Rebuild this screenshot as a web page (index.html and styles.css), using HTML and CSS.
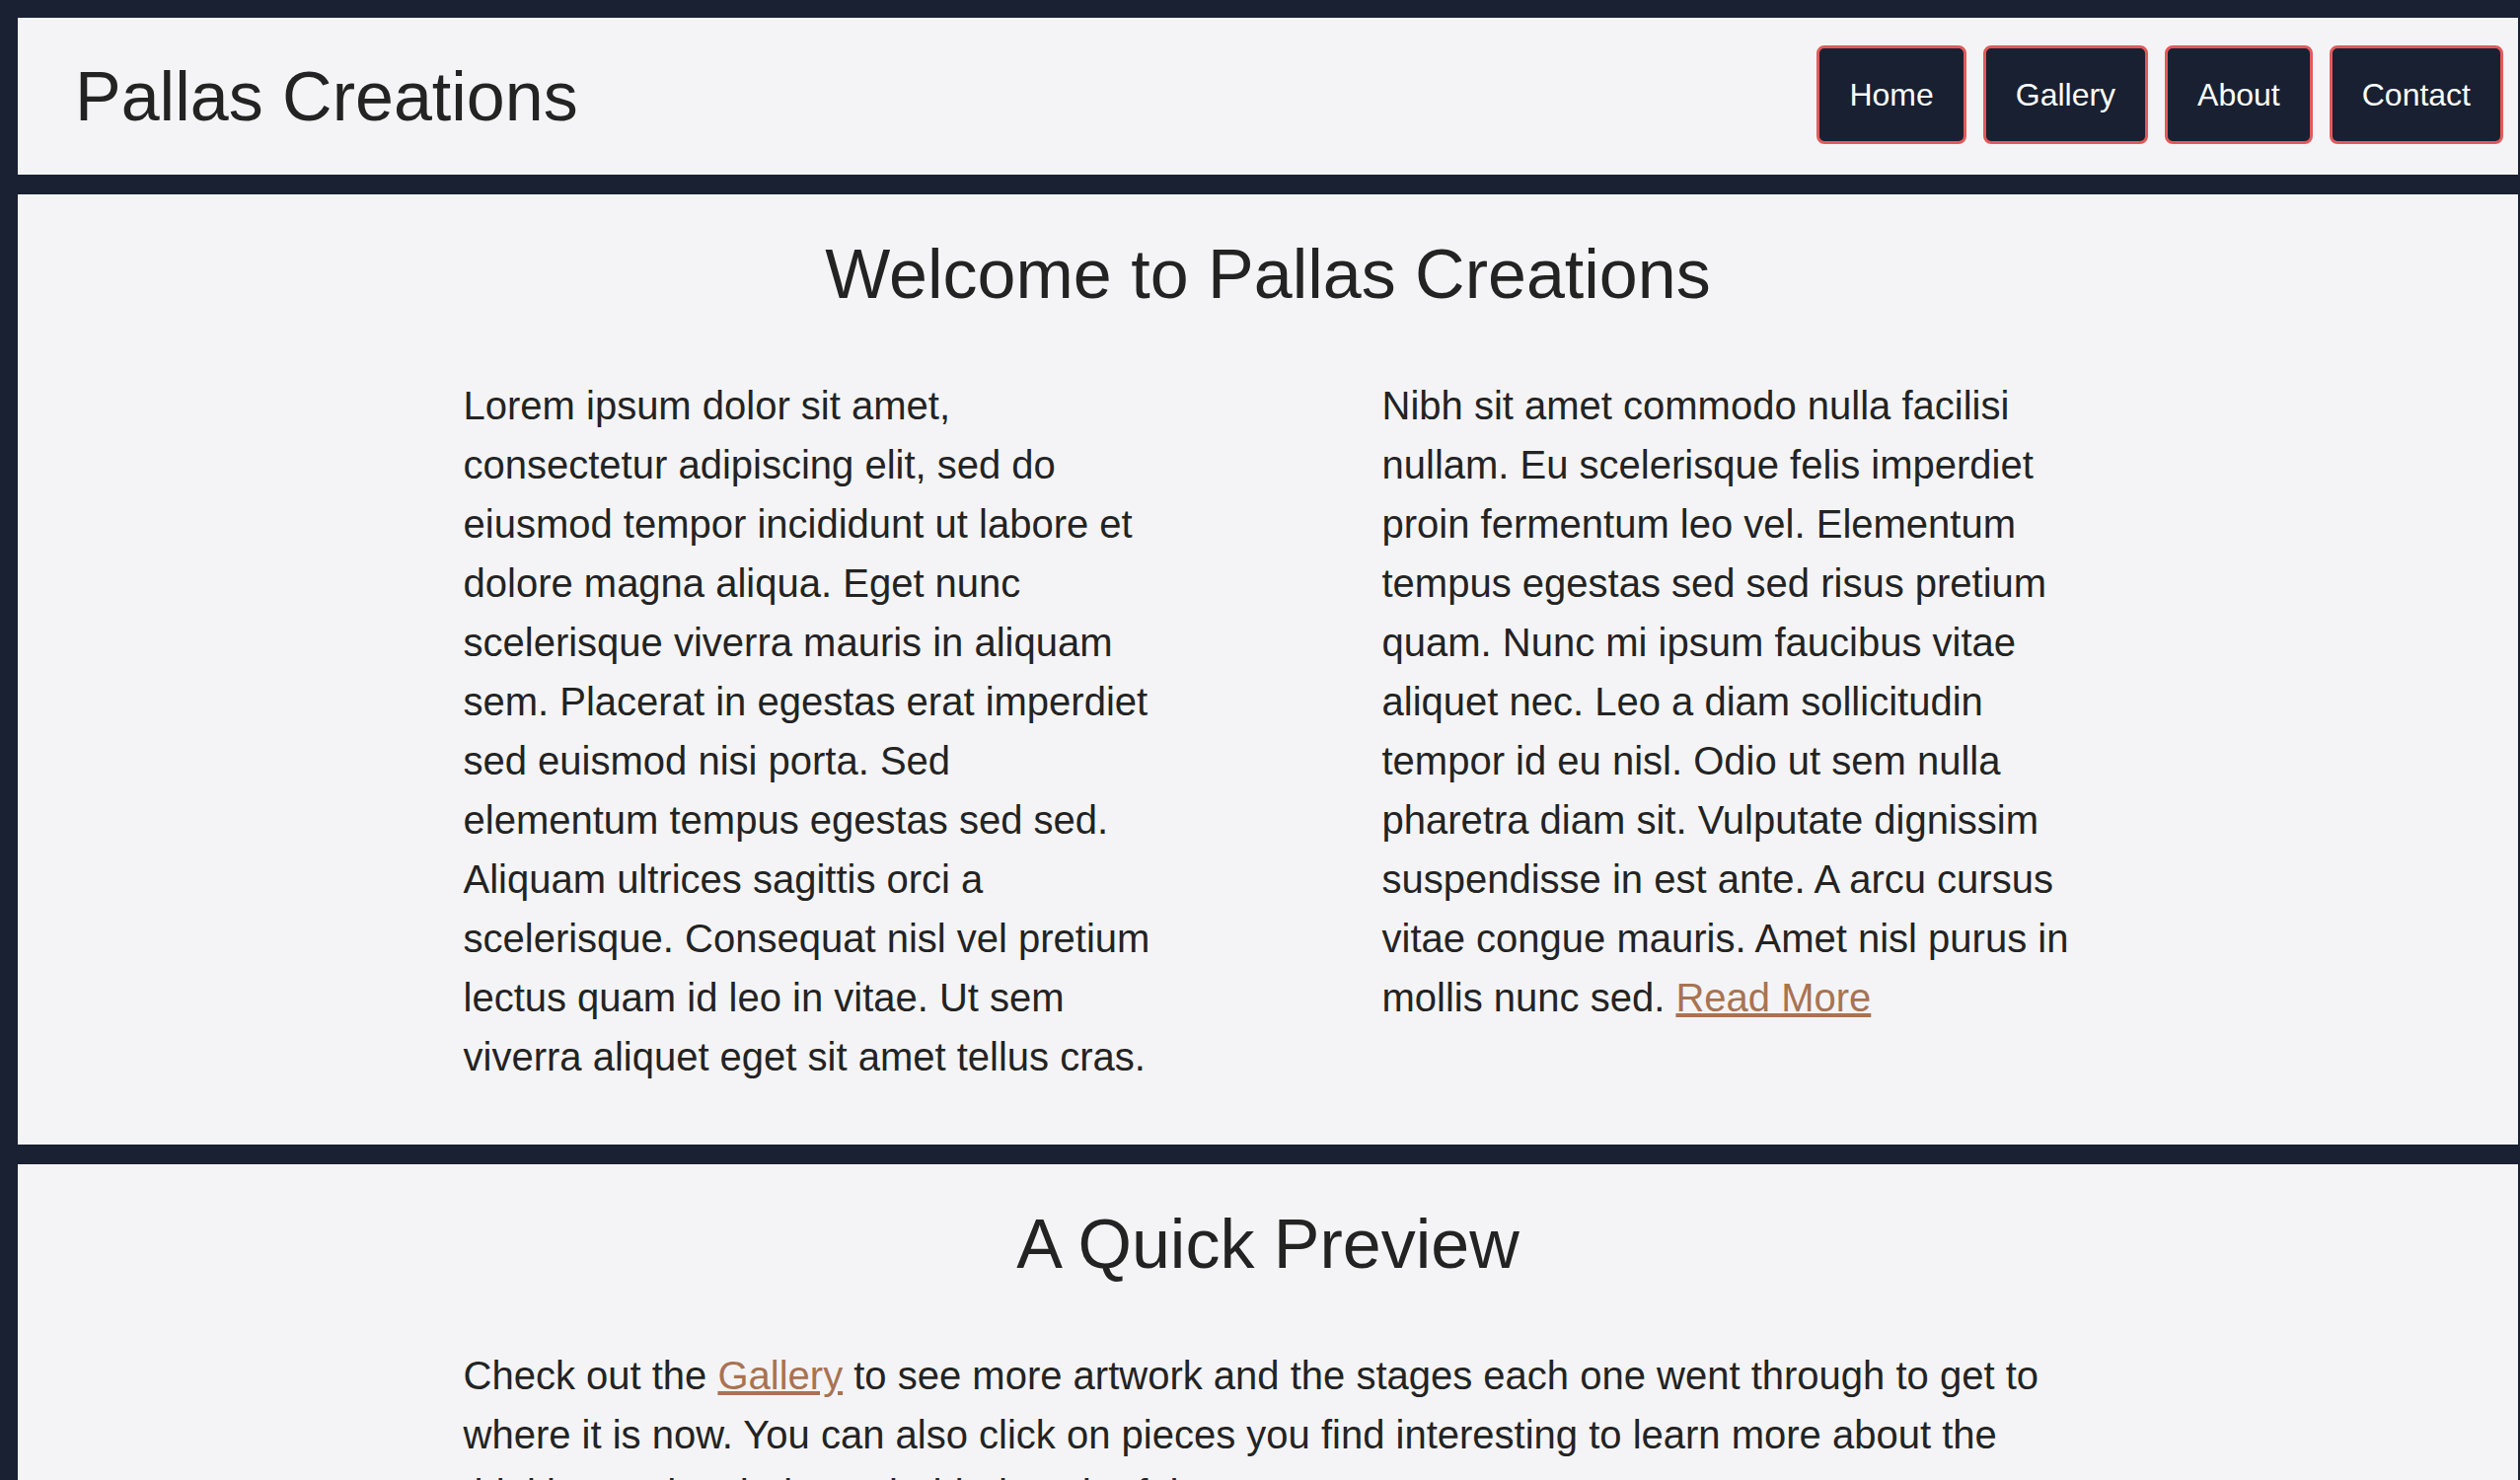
FILE: index.html
```html
<!DOCTYPE html>
<html lang="en">
<head>
<meta charset="utf-8">
<title>Pallas Creations</title>
<link rel="stylesheet" href="styles.css">
</head>
<body class="page">
  <header class="site-header">
    <h1 class="logo">Pallas Creations</h1>
    <nav class="nav">
      <a class="nav-btn" href="#">Home</a>
      <a class="nav-btn" href="#">Gallery</a>
      <a class="nav-btn" href="#">About</a>
      <a class="nav-btn" href="#">Contact</a>
    </nav>
  </header>
  <main class="content">
    <section class="panel">
      <h2 class="panel-title">Welcome to Pallas Creations</h2>
      <div class="columns">
        <p class="text">Lorem ipsum dolor sit amet, consectetur adipiscing elit, sed do eiusmod tempor incididunt ut labore et dolore magna aliqua. Eget nunc scelerisque viverra mauris in aliquam sem. Placerat in egestas erat imperdiet sed euismod nisi porta. Sed elementum tempus egestas sed sed. Aliquam ultrices sagittis orci a scelerisque. Consequat nisl vel pretium lectus quam id leo in vitae. Ut sem viverra aliquet eget sit amet tellus cras.</p>
        <p class="text">Nibh sit amet commodo nulla facilisi nullam. Eu scelerisque felis imperdiet proin fermentum leo vel. Elementum tempus egestas sed sed risus pretium quam. Nunc mi ipsum faucibus vitae aliquet nec. Leo a diam sollicitudin tempor id eu nisl. Odio ut sem nulla pharetra diam sit. Vulputate dignissim suspendisse in est ante. A arcu cursus vitae congue mauris. Amet nisl purus in mollis nunc sed. <a class="link" href="#">Read More</a></p>
      </div>
    </section>
    <section class="panel">
      <h2 class="panel-title">A Quick Preview</h2>
      <div class="single">
        <p class="text">Check out the <a class="link" href="#">Gallery</a> to see more artwork and the stages each one went through to get to where it is now. You can also click on pieces you find interesting to learn more about the thinking and techniques behind each of them.</p>
      </div>
    </section>
  </main>
</body>
</html>
```
FILE: styles.css
```css
html, body {
  margin: 0;
}

.page {
  background: #192133;
  padding: 18px 2px 0 18px;
  display: flex;
  flex-direction: column;
  gap: 20px;
  font-family: "Liberation Sans", Arial, Helvetica, sans-serif;
  color: #232323;
}

.site-header {
  background: #f4f4f6;
  height: 159px;
  box-sizing: border-box;
  padding: 0 15px 0 58px;
  display: flex;
  align-items: center;
  justify-content: space-between;
}

.logo {
  margin: 0;
  font-size: 70px;
  font-weight: 400;
  line-height: 80px;
}

.nav {
  display: flex;
  gap: 17px;
  margin-bottom: 3px;
}

.nav-btn {
  display: flex;
  align-items: center;
  height: 100px;
  box-sizing: border-box;
  padding: 0 30px;
  border: 3px solid #e05a5a;
  border-radius: 8px;
  background: #182032;
  color: #ffffff;
  font-size: 32px;
  text-decoration: none;
}

.content {
  display: flex;
  flex-direction: column;
  gap: 20px;
}

.panel {
  background: #f4f4f6;
  padding: 41px 0 59px;
}

.panel-title {
  margin: 0 0 63px;
  font-size: 70px;
  font-weight: 400;
  line-height: 80px;
  text-align: center;
}

.columns {
  display: grid;
  grid-template-columns: 700px 700px;
  column-gap: 231px;
  justify-content: center;
}

.single {
  width: 1631px;
  margin: 0 auto;
}

.text {
  margin: 0;
  font-size: 40px;
  line-height: 60px;
}

.link {
  color: #a87352;
  text-decoration: underline;
}
```
